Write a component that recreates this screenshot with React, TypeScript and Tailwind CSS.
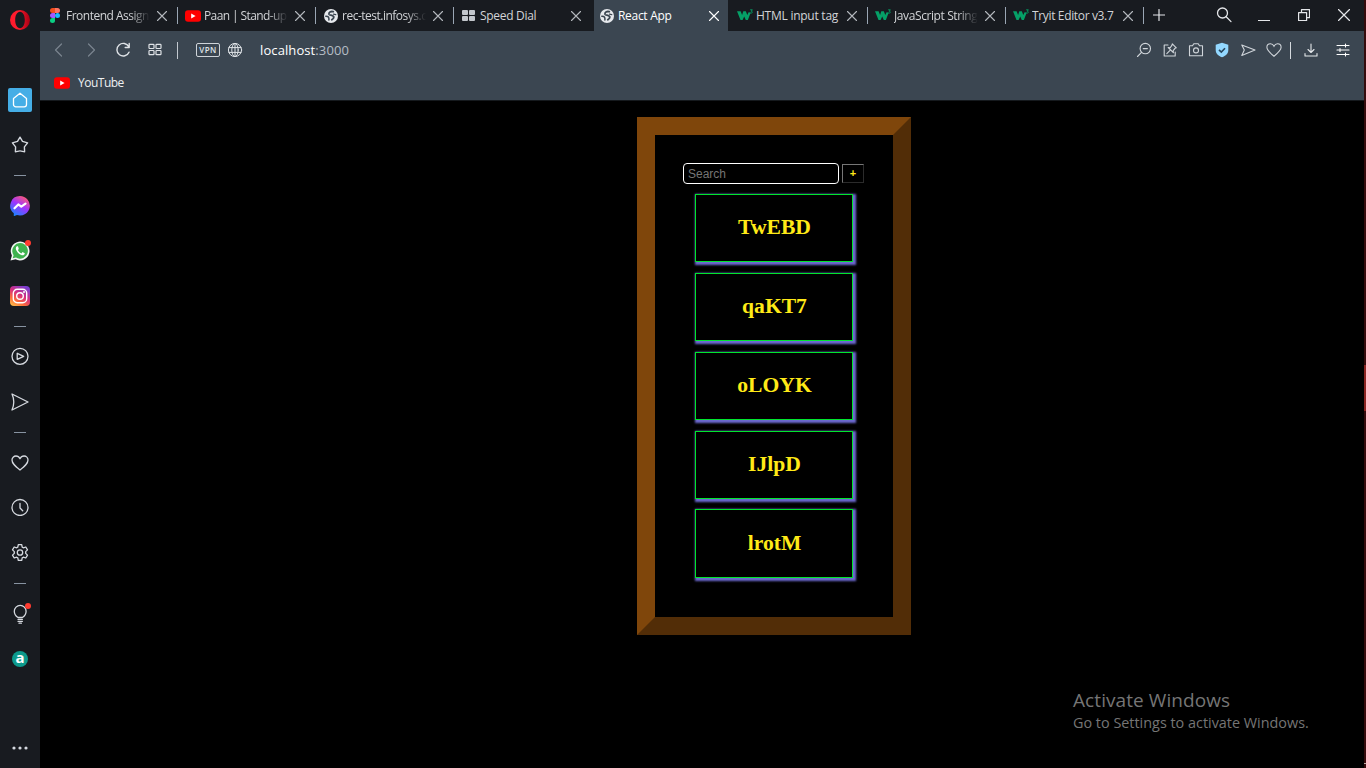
import React from "react";

type IconProps = { size?: number; className?: string; children: React.ReactNode; sw?: number };

function Icon({ size = 16, className = "", children, sw = 1.2 }: IconProps) {
  return (
    <svg
      width={size}
      height={size}
      viewBox={`0 0 ${size} ${size}`}
      fill="none"
      stroke="currentColor"
      strokeWidth={sw}
      strokeLinecap="round"
      strokeLinejoin="round"
      className={`block shrink-0 ${className}`}
    >
      {children}
    </svg>
  );
}

const Figma = () => (
  <svg width="10" height="15" viewBox="0 0 10 15" className="block shrink-0">
    <path d="M5 0H2.5a2.5 2.5 0 0 0 0 5H5z" fill="#f24e1e" />
    <path d="M5 0h2.5a2.5 2.5 0 0 1 0 5H5z" fill="#ff7262" />
    <path d="M5 5H2.5a2.5 2.5 0 0 0 0 5H5z" fill="#a259ff" />
    <circle cx="7.5" cy="7.5" r="2.5" fill="#1abcfe" />
    <path d="M5 10H2.5A2.5 2.5 0 1 0 5 12.5z" fill="#0acf83" />
  </svg>
);

const YouTube = () => (
  <svg width="16" height="12" viewBox="0 0 16 12" className="block shrink-0">
    <rect x="0" y="0.3" width="16" height="11.4" rx="3" fill="#ff0000" />
    <path d="M6.2 3.5v5L10.6 6z" fill="#fff" />
  </svg>
);

const GlobeSolid = () => (
  <svg width="14" height="14" viewBox="0 0 14 14" className="block shrink-0" fill="none" stroke="#39444f" strokeLinecap="round">
    <circle cx="7" cy="7" r="7" fill="#e6e9ed" stroke="none" />
    <path d="M9.300 2.700C6.800 2 4.400 3.300 5 5.200c.5 1.300 3.500.6 4.600 2.300.5 1-.2 2.200-1.800 3.300" strokeWidth="1.800" />
    <path d="M1.800 7.300C4.300 7.200 5.200 8.300 4.900 11" strokeWidth="1.500" />
    <path d="M9.500 5.200 11.800 5.600" strokeWidth="1.200" />
  </svg>
);

const Dial = () => (
  <svg width="13" height="11" viewBox="0 0 13 11" className="-ml-px block shrink-0" fill="#c3c7cc">
    <rect width="6" height="5" rx="1" />
    <rect x="7" width="6" height="5" rx="1" />
    <rect y="6" width="6" height="5" rx="1" />
    <rect x="7" y="6" width="6" height="5" rx="1" />
  </svg>
);

const W3 = () => (
  <svg width="16" height="12" viewBox="0 0 16 12" className="-mt-[2px] block shrink-0" fill="none" stroke="#05a067">
    <path d="M0 2.300h3.600L5.100 6 6.300 2.300h2.500L10.300 6l1.300-2.700 2.100.2-2.800 7.500H8.800L7.200 7.500 5.600 11H3.500z" fill="#05a067" stroke="none" />
    <path d="M13.200 .8h2.200l-1.200 1.400c1.700 0 1.600 2.400-1 1.900" strokeWidth=".9" />
  </svg>
);

const Cross = () => (
  <Icon size={12} sw={1.1}>
    <path d="M1.500 1.500l9 9M10.500 1.500l-9 9" />
  </Icon>
);

const fade = "[mask-image:linear-gradient(to_right,black_76%,transparent)]";

const tabs = [
  { title: "Frontend Assign", icon: <Figma />, track: "tracking-[-0.5px]", fade, sep: true },
  { title: "Paan | Stand-up", icon: <YouTube />, track: "tracking-[-0.6px]", fade, sep: true },
  { title: "rec-test.infosys.c", icon: <GlobeSolid />, track: "tracking-[-0.5px]", fade, sep: true },
  { title: "Speed Dial", icon: <Dial />, track: "tracking-[-0.3px]", fade: "", sep: false },
  { title: "React App", icon: <GlobeSolid />, track: "tracking-[-0.3px]", fade: "", sep: false, active: true },
  { title: "HTML input tag", icon: <W3 />, track: "tracking-[-0.25px]", fade: "", sep: true },
  { title: "JavaScript String", icon: <W3 />, track: "tracking-[-0.4px]", fade, sep: true },
  { title: "Tryit Editor v3.7", icon: <W3 />, track: "tracking-[-0.35px]", fade: "", sep: true },
];

function Tab({ tab }: { tab: (typeof tabs)[number] }) {
  return (
    <div className={`flex h-[31px] w-[138px] shrink-0 items-center px-[2px] ${tab.active ? "text-white" : "text-[#d2d4d7]"}`}>
      <div className={`flex h-full min-w-0 flex-1 items-center pl-1 ${tab.active ? "bg-[#3b4651]" : ""}`}>
        <div className="flex w-[18px] shrink-0 justify-center">{tab.icon}</div>
        <div
          className={`ml-[2px] w-[84px] overflow-hidden whitespace-nowrap text-[12px] leading-[18px] ${tab.track} ${tab.fade}`}
        >
          {tab.title}
        </div>
        <div className={`ml-[6px] ${tab.active ? "" : "text-[#b4b8bd]"}`}>
          <Cross />
        </div>
      </div>
      {tab.sep && <div className="-mr-[2px] h-[17px] w-px bg-[#9aa6b4]" />}
    </div>
  );
}

const Heart = () => (
  <path d="M9 16C4 12 1 9.500 1 6a4 4 0 0 1 4-4c1.800 0 3.200 1 4 2.700C9.800 3 11.200 2 13 2a4 4 0 0 1 4 4c0 3.500-3 6-8 10z" />
);

const Dash = ({ mt }: { mt: string }) => <div className={`h-px w-3 shrink-0 bg-[#8793a1] ${mt}`} />;

const Slot = ({ mt, children }: { mt: string; children: React.ReactNode }) => (
  <div className={`relative flex h-6 w-6 shrink-0 items-center justify-center ${mt}`}>{children}</div>
);

const Dot = () => <span className="absolute left-[17px] top-[1px] h-[6px] w-[6px] rounded-full bg-[#ff3b30]" />;

function Sidebar() {
  return (
    <aside className="flex h-full w-10 shrink-0 flex-col items-center bg-[#181b20] pb-2 pt-2 text-[#d5d9df]">
      <Slot mt="mt-0">
        <svg width="20" height="20" viewBox="0 0 20 20">
          <defs>
            <linearGradient id="op" x1="0" y1="0" x2="1" y2="0">
              <stop offset=".4" stopColor="#ff1b2d" />
              <stop offset="1" stopColor="#a70014" />
            </linearGradient>
          </defs>
          <path fillRule="evenodd" fill="url(#op)" d="M10 0a10 10 0 1 0 0 20 10 10 0 0 0 0-20zm0 1.800c3 0 4.800 3.600 4.800 8.200s-1.800 8.200-4.800 8.200S5.200 14.600 5.200 10 7 1.800 10 1.800z" />
        </svg>
      </Slot>
      <Slot mt="mt-[56px]">
        <div className="flex h-6 w-6 items-center justify-center rounded-[2px] bg-[#45aee6] text-white">
          <Icon size={16} sw={1.3}>
            <path d="M8 1.200 14.500 6.500v6a2.300 2.300 0 0 1-2.300 2.300H3.800a2.300 2.300 0 0 1-2.300-2.300v-6z" />
          </Icon>
        </div>
      </Slot>
      <Slot mt="mt-[21px]">
        <Icon size={18} sw={1.4}>
          <path d="M9 1.200 11.500 5.300l5.100 1.600-3.200 4 .2 4.900c-1.500 0-3-.9-4.600-.9s-3.100.9-4.600.9l.2-4.900-3.200-4 5.100-1.600z" />
        </Icon>
      </Slot>
      <Dash mt="mt-[18px]" />
      <Slot mt="mt-[18px]">
        <svg width="20" height="20" viewBox="0 0 20 20">
          <defs>
            <linearGradient id="ms" x1=".15" y1="1" x2=".75" y2="0">
              <stop offset="0" stopColor="#0a8cff" />
              <stop offset=".55" stopColor="#a033ff" />
              <stop offset="1" stopColor="#ff5c72" />
            </linearGradient>
          </defs>
          <path d="M10 0a10 9.700 0 1 1-3 19l-3.200 1.200V17.200A9.700 9.700 0 0 1 10 0z" fill="url(#ms)" />
          <path d="M4.500 12.300 8.300 8.400l3 2.200 4.200-3" fill="none" stroke="#fff" strokeWidth="2.200" strokeLinecap="round" strokeLinejoin="round" />
        </svg>
      </Slot>
      <Slot mt="mt-[21px]">
        <svg width="20" height="20" viewBox="0 0 20 20">
          <path d="M.5 19.500 1.900 14.600A9.400 9.400 0 1 1 5.500 18.200z" fill="#f4f6f5" />
          <path d="M2.700 17.300l.9-3.100a7.800 7.800 0 1 1 2.400 2.300z" fill="#3fb24f" />
          <path d="M7 5.300c-1.500.9-1.600 2.600-.3 4.800 1.500 2.400 3.500 4 5.800 4.200 1.300 0 2.300-.8 2.300-2l-2.300-1.200-1.100 1.300c-1.700-.7-2.800-1.800-3.500-3.300l.9-1.200L8 5.300z" fill="#fff" />
        </svg>
        <Dot />
      </Slot>
      <Slot mt="mt-[21px]">
        <svg width="20" height="20" viewBox="0 0 20 20">
          <defs>
            <linearGradient id="ig" x1=".1" y1="1" x2=".7" y2="0">
              <stop offset="0" stopColor="#ffc24a" />
              <stop offset=".3" stopColor="#fb6a3c" />
              <stop offset=".6" stopColor="#d62e80" />
              <stop offset="1" stopColor="#7a3fd0" />
            </linearGradient>
          </defs>
          <rect width="20" height="20" rx="4" fill="url(#ig)" />
          <g fill="none" stroke="#fff" strokeWidth="1.400">
            <rect x="3.300" y="3.300" width="13.400" height="13.400" rx="4" />
            <circle cx="10" cy="10" r="3.300" />
          </g>
          <circle cx="14" cy="6" r="1" fill="#fff" />
        </svg>
      </Slot>
      <Dash mt="mt-[18px]" />
      <Slot mt="mt-[17px]">
        <Icon size={18} sw={1.3} className="mr-px">
          <circle cx="9" cy="9.300" r="8" />
          <path d="M6.200 6.300v6L12.700 9.300z" />
        </Icon>
      </Slot>
      <Slot mt="mt-[22px]">
        <Icon size={18} sw={1.3} className="mr-px">
          <path d="M1 1 17 9 1 17c2.400-5.400 2.400-10.600 0-16z" />
        </Icon>
      </Slot>
      <Dash mt="mt-[18px]" />
      <Slot mt="mt-[18px]">
        <Icon size={18} sw={1.3} className="mr-px">
          <Heart />
        </Icon>
      </Slot>
      <Slot mt="mt-[20px]">
        <Icon size={18} sw={1.3} className="mr-px">
          <circle cx="9" cy="9.500" r="8" />
          <path d="M9 5.500V10l2.700 2.700" />
        </Icon>
      </Slot>
      <Slot mt="mt-[21px]">
        <Icon size={18} sw={1.3} className="mr-px">
          <g transform="translate(0 .5)">
            <path d="M7.300 1.200h3.400l.5 2.400 1.200.7 2.400-.8 1.700 2.900-1.800 1.700v1.800l1.800 1.700-1.700 2.900-2.400-.8-1.200.7-.5 2.400H7.300l-.5-2.400-1.200-.7-2.400.8-1.700-2.900 1.800-1.700V8.100L1.500 6.400l1.700-2.900 2.400.8 1.200-.7z" />
            <circle cx="9" cy="9" r="2.700" />
          </g>
        </Icon>
      </Slot>
      <Dash mt="mt-[19px]" />
      <Slot mt="mt-[18px]">
        <Icon size={20} sw={1.3}>
          <path d="M8 13.500C5.500 12 4.300 10 4.300 7.300a5.900 5.900 0 0 1 11.800 0c0 2.700-1.300 4.700-3.700 6.200z" />
          <path d="M8 15.300h4.400M8 17.300h4.400M9 19.200h2.400" />
        </Icon>
        <Dot />
      </Slot>
      <Slot mt="mt-[21px]">
        <div className="flex h-4 w-4 items-center justify-center rounded-full bg-[#0d9a8c] font-['Open_Sans',sans-serif] text-[15px] font-bold leading-none text-white">
          <span className="-mt-[4px]">a</span>
        </div>
      </Slot>
      <Slot mt="mt-auto">
        <svg width="16" height="4" viewBox="0 0 16 4" fill="currentColor">
          <circle cx="2" cy="2" r="1.600" />
          <circle cx="8" cy="2" r="1.600" />
          <circle cx="14" cy="2" r="1.600" />
        </svg>
      </Slot>
    </aside>
  );
}

function TabBar() {
  return (
    <div className="flex h-[31px] items-center bg-[#181b20] text-[#e4e6e9]">
      {tabs.map((t) => (
        <Tab key={t.title} tab={t} />
      ))}
      <Icon size={12} sw={1.2} className="ml-[8.5px] -mt-px">
        <path d="M6 .5v11M.5 6h11" />
      </Icon>
      <div className="ml-auto flex items-center pr-[14px]">
        <Icon size={16} sw={1.3} className="-mt-[2px] mr-[26px]">
          <circle cx="6.500" cy="6" r="5" />
          <path d="m10.200 9.800 4.800 4.800" />
        </Icon>
        <Icon size={12} sw={1} className="mr-[28px]">
          <path d="M0 10.500h12" />
        </Icon>
        <Icon size={12} sw={1.2} className="-mt-px mr-[28px]">
          <path d="M.6 3.600h8v8h-8zM3.500 3.500V.6h8v8H8.700" />
        </Icon>
        <Icon size={12} sw={1.2} className="-mt-px">
          <path d="m.5.500 11 11M11.500.500l-11 11" />
        </Icon>
      </div>
    </div>
  );
}

function Toolbar() {
  return (
    <div className="flex h-[70px] flex-col border-b border-[#15191d] bg-[#3b4651] text-[#dfe3e7]">
      <div className="flex h-[38px] items-center pl-[11px] pr-[13px]">
        <Icon size={16} className="text-[#7a858f]">
          <path d="M10.500 2 4.500 8l6 6" />
        </Icon>
        <Icon size={16} className="ml-[16px] text-[#7a858f]">
          <path d="m5.500 2 6 6-6 6" />
        </Icon>
        <Icon size={16} sw={1.4} className="ml-[16px]">
          <path d="M13.800 4.800A6.300 6.300 0 1 0 14 10.200M14.200 1.500v4h-4" />
        </Icon>
        <Icon size={14} className="ml-[17px]">
          <rect x="1" y="1.300" width="5" height="4.200" rx=".8" />
          <rect x="8" y="1.300" width="5" height="4.200" rx=".8" />
          <rect x="1" y="7.500" width="5" height="4.200" rx=".8" />
          <rect x="8" y="7.500" width="5" height="4.200" rx=".8" />
        </Icon>
        <div className="ml-[15px] mt-px h-[17px] w-px bg-[#c3c9d0]" />
        <div className="ml-[18px] flex h-[14px] w-6 items-center justify-center rounded-[2px] border border-[#cfd4d9] text-[8px] font-semibold tracking-[0.5px]">VPN</div>
        <Icon size={16} sw={1} className="ml-[7px]">
          <circle cx="8" cy="8" r="6.600" />
          <ellipse cx="8" cy="8" rx="3.200" ry="6.600" />
          <path d="M2 5.600h12M2 10.400h12M8 1.400v13.200" />
        </Icon>
        <div className="-mt-px ml-[17px] text-[13px] leading-[18px] tracking-[0.1px] text-white">
          localhost<span className="text-[#b5bdc5]">:3000</span>
        </div>
        <div className="ml-auto flex items-center text-[#d0d5da]">
          <Icon size={16} sw={1.1} className="mr-[10px]">
            <circle cx="9.300" cy="6.600" r="5.200" />
            <path d="M5.500 10.300 1.500 14.500M7.200 6.600h4.200" />
          </Icon>
          <Icon size={16} sw={1.1} className="mr-[10px]">
            <path d="M6 3H2.200v11h11V10M10.300 1.800l4 4-1.300.5-1.800 2.400.2 2-5.200-5.200 2 .2 1.800-2.600zM8.300 8.200 4.800 11.600" />
          </Icon>
          <Icon size={16} sw={1.1} className="mr-[10px]">
            <path d="M1.500 3.800h3l1.300-2h4.400l1.300 2h3v10h-13z" />
            <circle cx="8" cy="8.400" r="2.500" />
          </Icon>
          <svg width="16" height="16" viewBox="0 0 16 16" className="mr-[10px] block">
            <path d="M8 .8 14.300 2.800V8c0 3.500-2.500 5.900-6.300 7.300C4.200 13.900 1.700 11.500 1.700 8V2.800z" fill="#93d8ff" />
            <path d="m5 7.800 2.300 2.200L11 6.200" fill="none" stroke="#26455c" strokeWidth="1.600" />
          </svg>
          <Icon size={16} sw={1.1} className="mr-[10px]">
            <path d="M1.800 3 15 8 1.800 13.500 4.300 8z" />
          </Icon>
          <svg width="16" height="16" viewBox="0 0 18 18" className="mr-[8px] block" fill="none" stroke="currentColor" strokeWidth="1.200">
            <Heart />
          </svg>
          <div className="mr-[12px] h-[17px] w-px bg-[#d5dade]" />
          <Icon size={16} sw={1.1} className="mr-[16px] text-[#e6e9ec]">
            <path d="M8 2v8.300M5 7.500l3 3 3-3M2 11.500V14h12v-2.500" />
          </Icon>
          <Icon size={16} sw={1.1} className="text-white">
            <path d="M2 3.500h12M2 8h12M2 12.500h12M10.500 2v3M5 6.500v3M10.500 11v3" />
          </Icon>
        </div>
      </div>
      <div className="flex h-[28px] items-center pl-[14px]">
        <YouTube />
        <div className="ml-2 text-[12px] leading-[18px] tracking-[-0.5px] text-[#eef0f2]">YouTube</div>
      </div>
    </div>
  );
}

const notes = ["TwEBD", "qaKT7", "oLOYK", "IJlpD", "lrotM"];

function Page() {
  return (
    <main className="relative flex-1 overflow-hidden bg-black pl-[597px] pt-[16px]">
      <div className="h-[518px] w-[274px] border-[18px] border-b-[#522d07] border-l-[#7f460b] border-r-[#522d07] border-t-[#7f460b] pl-[28px] pt-[28px]">
        <div className="flex h-[21px] items-center gap-[3px] font-['Liberation_Sans',sans-serif]">
          <input
            placeholder="Search"
            className="h-[21px] w-[156px] rounded-[4px] border border-white bg-black px-[4px] text-[12px] text-white placeholder:text-[#757575] placeholder:opacity-100"
          />
          <button className="flex h-[19px] w-[22px] items-center justify-center border border-b-[#2b2b2b] border-l-[#767676] border-r-[#2b2b2b] border-t-[#767676] text-[11px] font-bold leading-none text-[#ffe81a]">
            +
          </button>
        </div>
        <div className="ml-[12px] mt-[10.2px] flex flex-col gap-[10.6px]">
          {notes.map((n) => (
            <div
              key={n}
              className="flex h-[68.2px] w-[158px] shrink-0 items-center justify-center border border-[#00e52e] bg-black pl-px font-['Liberation_Serif',serif] text-[21.6px] font-bold leading-none text-[#ffea17] shadow-[1.5px_1.5px_2px_1.5px_#6c69cf]"
            >
              {n}
            </div>
          ))}
        </div>
      </div>
      <div className="absolute left-[1033px] top-[587px] whitespace-nowrap text-[#757575]">
        <div className="text-[19px] leading-[24px] tracking-[0.08px]">Activate Windows</div>
        <div className="mt-px text-[14.4px] leading-[20px]">Go to Settings to activate Windows.</div>
      </div>
    </main>
  );
}

export default function App() {
  return (
    <div className="flex h-[768px] w-[1366px] overflow-hidden bg-black font-['Open_Sans','Noto_Sans',sans-serif]">
      <Sidebar />
      <div className="flex h-full w-[1324px] shrink-0 flex-col">
        <TabBar />
        <Toolbar />
        <Page />
      </div>
      <div className="flex h-full w-[2px] shrink-0 flex-col bg-[#350b0c]">
        <div className="mt-[365px] h-[46px] bg-[#8b2522]" />
        <div className="mt-[352px] h-px bg-[#b9a9a4]" />
      </div>
    </div>
  );
}
